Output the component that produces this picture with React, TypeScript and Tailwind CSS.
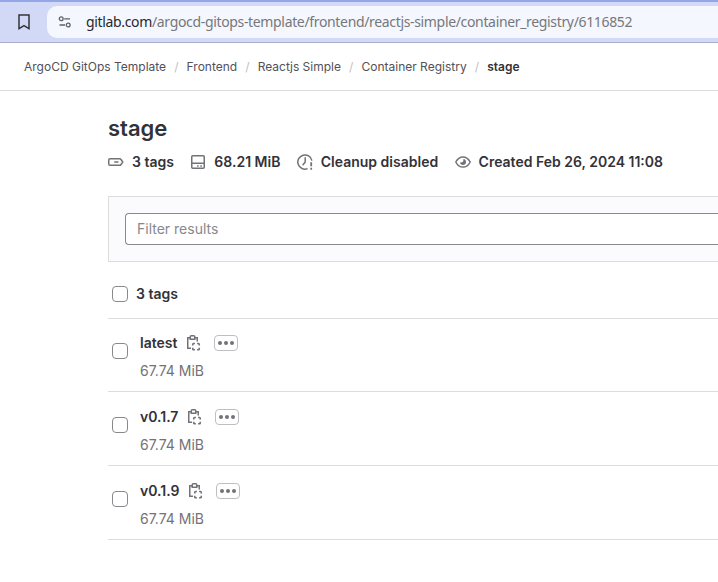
import React from "react";

type IconProps = { className?: string };

const svgProps = {
  viewBox: "0 0 16 16",
  width: 16,
  height: 16,
  fill: "none",
  stroke: "currentColor",
  strokeWidth: 1.5,
};

function BookmarkIcon() {
  return (
    <svg width="12" height="16" viewBox="0 0 12 16" fill="none" stroke="#33353d" strokeWidth="1.5" className="shrink-0">
      <path d="M1 1h10v13.6L6 11.7 1 14.6z" />
    </svg>
  );
}

function TuneIcon() {
  return (
    <svg width="14" height="14" viewBox="0 0 14 14" fill="none" stroke="#5f6068" strokeWidth="1.3" className="shrink-0">
      <circle cx="3.2" cy="3.8" r="1.9" />
      <path d="M6.2 3.8H12M1.5 10H7" />
      <circle cx="10.2" cy="10" r="1.9" />
    </svg>
  );
}

function LabelIcon({ className }: IconProps) {
  return (
    <svg {...svgProps} className={className}>
      <path d="M2 4.75h9.8c.4 0 .8.2 1 .5L14.8 8l-2 2.75c-.2.3-.6.5-1 .5H2c-.7 0-1.25-.55-1.25-1.25V6c0-.7.55-1.25 1.25-1.25z" />
      <path d="M6.2 8h4.3" />
    </svg>
  );
}

function DiskIcon({ className }: IconProps) {
  return (
    <svg {...svgProps} className={className}>
      <rect x="1.75" y="1.75" width="12.5" height="12.5" rx="1" />
      <path d="M2 9.25h12" />
      <path d="M7.1 11.9h1.5M10.3 11.9h1.5" />
    </svg>
  );
}

function ExpireIcon({ className }: IconProps) {
  return (
    <svg {...svgProps} className={className}>
      <path d="M10.6 14.6A7.1 7.1 0 1 1 14.9 6.6" />
      <path d="M8.2 3.8V8L6 10.7" strokeLinecap="round" strokeLinejoin="round" />
      <path d="M14.2 8.2v4M14.2 13.8v2" strokeWidth="1.8" />
    </svg>
  );
}

function EyeIcon({ className }: IconProps) {
  return (
    <svg {...svgProps} className={className}>
      <path d="M.8 8S3.4 2.9 8 2.9 15.2 8 15.2 8 12.6 13.1 8 13.1.8 8 .8 8z" />
      <path d="M8.4 5a3 3 0 1 1-3.4 3.200c.3.15.6.2.9.2A2.500 2.500 0 0 0 8.400 5.900z" fill="currentColor" stroke="none" />
    </svg>
  );
}

function ClipboardIcon({ className }: IconProps) {
  return (
    <svg {...svgProps} className={className}>
      <path d="M5 2.75H2.75v10.5H6M10 2.75h2.25V6.500" />
      <path d="M5.250 1.750c0-.6.4-1 1-1h2.500c.6 0 1 .4 1 1v2.500h-4.500z" />
      <path
        d="M7.750 10.500V9.250c0-.5.3-.8.800-.8H9.900M12.100 8.450h1.350c.5 0 .8.300.8.800V10.500M14.250 12.700v1.250c0 .5-.3.800-.8.800H12.100M9.900 14.750H8.550c-.5 0-.8-.300-.8-.8V12.700"
        strokeWidth="1.6"
      />
    </svg>
  );
}

function MoreIcon({ className }: IconProps) {
  return (
    <svg width="16" height="6" viewBox="0 0 16 6" fill="currentColor" className={className}>
      <circle cx="2" cy="3" r="2" />
      <circle cx="8" cy="3" r="2" />
      <circle cx="14" cy="3" r="2" />
    </svg>
  );
}

function Checkbox() {
  return <button role="checkbox" aria-checked="false" className="block size-4 shrink-0 rounded-[4px] border border-[#89888d] bg-white" />;
}

const crumbs = ["ArgoCD GitOps Template", "Frontend", "Reactjs Simple", "Container Registry"];

const tags = [
  { name: "latest", size: "67.74 MiB" },
  { name: "v0.1.7", size: "67.74 MiB" },
  { name: "v0.1.9", size: "67.74 MiB" },
];

function Meta({ icon, children }: { icon: React.ReactNode; children: React.ReactNode }) {
  return (
    <div className="flex items-center gap-2">
      <span className="shrink-0 text-[#737278]">{icon}</span>
      <span>{children}</span>
    </div>
  );
}

export default function App() {
  return (
    <div className="h-[582px] w-[718px] overflow-hidden bg-white font-[Inter,sans-serif] text-sm text-[#333238]">
      <div className="flex h-[43px] items-center border-t-2 border-b border-t-[#93a6e7] border-b-[#a9afcb] bg-[#d1d9f6] pl-[18px]">
        <BookmarkIcon />
        <div className="ml-[17px] flex h-8 flex-1 items-center rounded-l-[10px] bg-[#f4f7fd] pl-[11px]">
          <TuneIcon />
          <div className="ml-[14px] whitespace-nowrap font-['Noto_Sans',sans-serif] text-[14px] tracking-[-0.34px] text-[#76777c]">
            <span className="text-[#27282d]">gitlab.com</span>/argocd-gitops-template/frontend/reactjs-simple/container_registry/6116852
          </div>
        </div>
      </div>
      <nav className="flex h-12 items-center border-b border-[#dcdcde] pl-6 text-xs whitespace-nowrap text-[#535158]">
        {crumbs.map((c) => (
          <React.Fragment key={c}>
            <a>{c}</a>
            <span className="w-[20.5px] text-center text-[#bfbfc3]">/</span>
          </React.Fragment>
        ))}
        <span className="font-semibold text-[#333238]">stage</span>
      </nav>
      <main className="pl-[108px]">
        <h1 className="pt-[23px] text-[22px] leading-[28px] font-semibold">stage</h1>
        <div className="mt-[10px] flex h-5 items-center gap-[16.4px] font-semibold whitespace-nowrap">
          <Meta icon={<LabelIcon />}>3 tags</Meta>
          <Meta icon={<DiskIcon />}>68.21 MiB</Meta>
          <Meta icon={<ExpireIcon />}>Cleanup disabled</Meta>
          <Meta icon={<EyeIcon />}>Created Feb 26, 2024 11:08</Meta>
        </div>
        <div className="mt-6 h-[66px] border-y border-l border-[#dcdcde] bg-[#fbfafd] py-4 pl-4">
          <div className="flex h-8 items-center rounded-l-[4px] border border-r-0 border-[#89888d] bg-white pl-[11px] text-[#89888d]">Filter results</div>
        </div>
        <div className="flex h-[57px] items-center gap-2 border-b border-[#dcdcde] pt-2 pl-1 font-semibold">
          <Checkbox />
          <span>3 tags</span>
        </div>
        {tags.map((t, i) => (
          <div key={t.name} className={`flex items-start gap-3 border-b border-[#dcdcde] pl-1 ${i === 0 ? "h-[73px] pt-3" : "h-[74px] pt-[13px]"}`}>
            <div className="pt-3">
              <Checkbox />
            </div>
            <div>
              <div className="flex h-6 items-center font-semibold">
                <span>{t.name}</span>
                <ClipboardIcon className="ml-2 text-[#737278]" />
                <button className="ml-[12.6px] flex h-4 w-6 items-center justify-center rounded-[4px] border border-[#bfbfc3] text-[#737278]">
                  <MoreIcon />
                </button>
              </div>
              <div className="mt-1.5 leading-5 text-[#737278]">{t.size}</div>
            </div>
          </div>
        ))}
      </main>
    </div>
  );
}
